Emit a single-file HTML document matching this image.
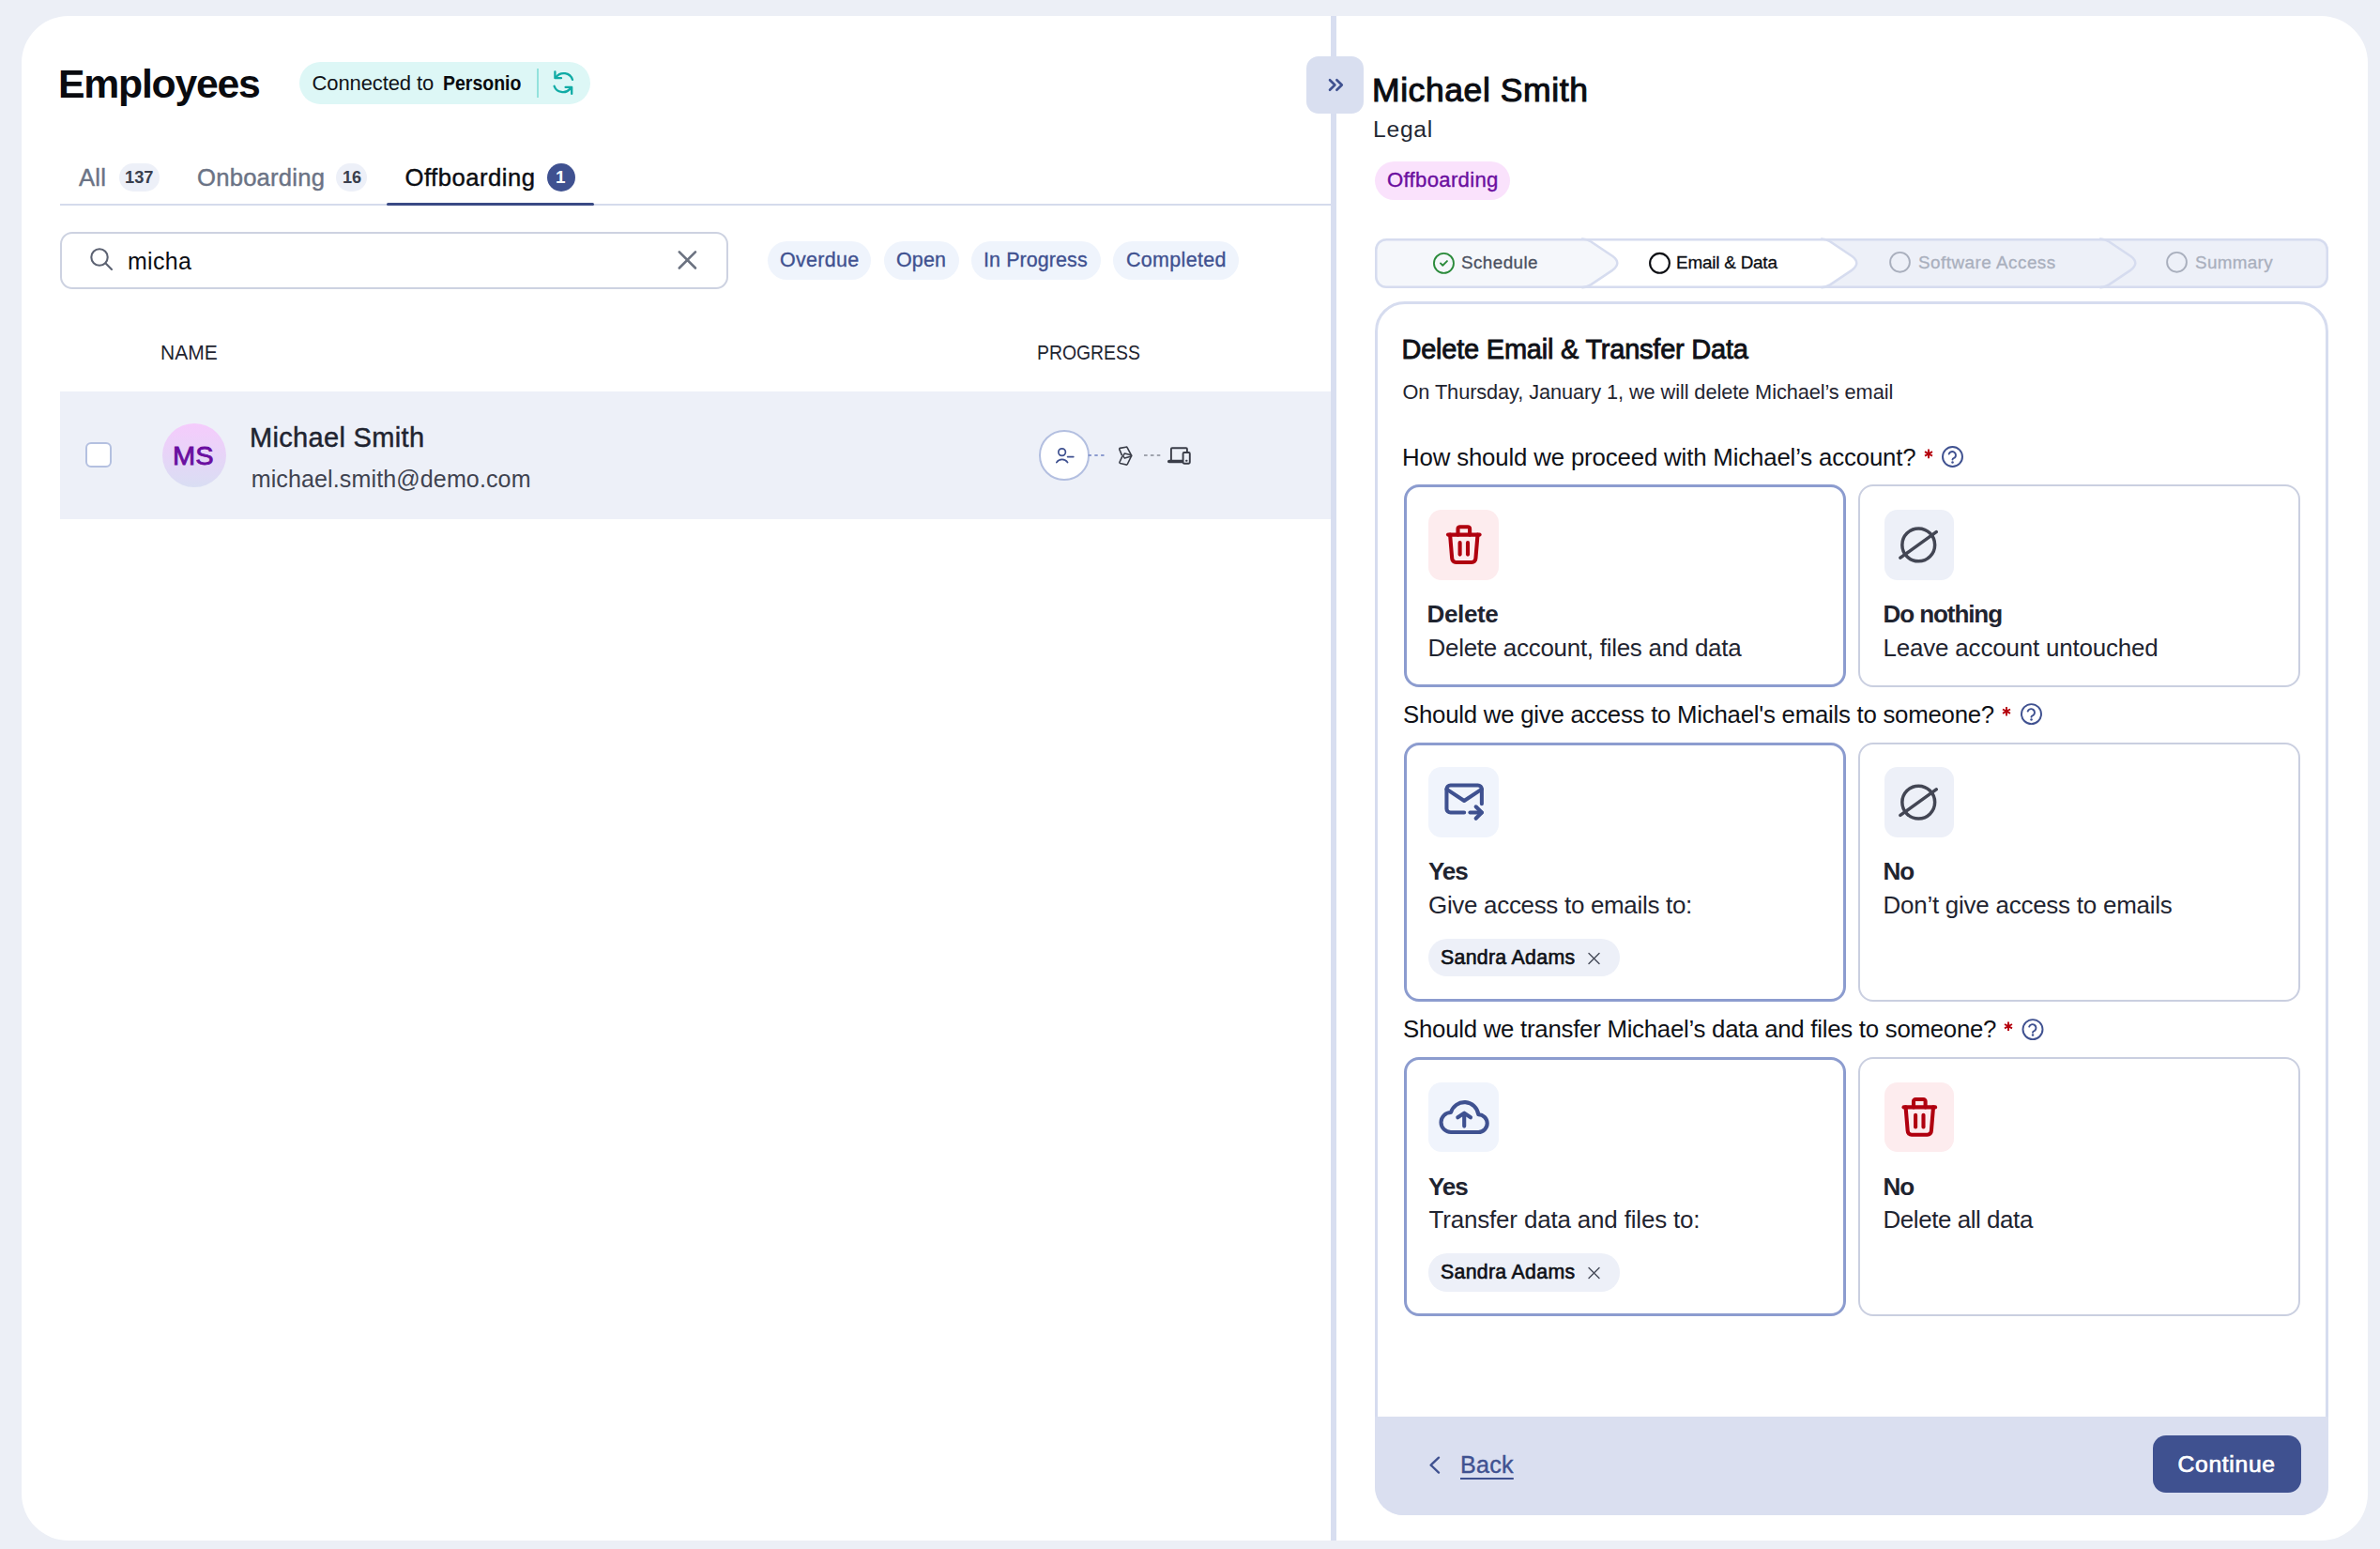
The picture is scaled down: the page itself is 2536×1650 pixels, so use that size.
<!DOCTYPE html>
<html><head><meta charset="utf-8"><style>
html,body{margin:0;padding:0;width:2536px;height:1650px;overflow:hidden;background:#ECEFF6;font-family:"Liberation Sans",sans-serif;}
.a{position:absolute;box-sizing:border-box;}
.t{position:absolute;white-space:nowrap;line-height:1;}
svg.ic{position:absolute;left:0;top:0;width:2536px;height:1650px;overflow:visible;}
</style></head><body>
<div class="a" style="left:23px;top:17px;width:2500px;height:1624px;background:#FFFFFF;border-radius:50px;"></div>
<!-- connected badge -->
<div class="a" style="left:319px;top:66px;width:310px;height:45px;background:#DDF7F6;border-radius:23px;"></div>
<div class="a" style="left:571.5px;top:73px;width:2px;height:31px;background:#93E2DC;"></div>
<!-- tab badges -->
<div class="a" style="left:127px;top:174px;width:43px;height:30px;background:#EDF0F8;border-radius:15px;"></div>
<div class="a" style="left:358px;top:174px;width:32.5px;height:30px;background:#EDF0F8;border-radius:15px;"></div>
<div class="a" style="left:583px;top:174px;width:30px;height:30px;background:#3F5190;border-radius:15px;"></div>
<!-- tab line -->
<div class="a" style="left:64px;top:217px;width:1354px;height:2px;background:#D5DBEC;"></div>
<div class="a" style="left:412px;top:216px;width:221px;height:3px;background:#3A4A85;border-radius:2px;"></div>
<!-- search -->
<div class="a" style="left:64px;top:247px;width:712px;height:61px;border:2px solid #CDD2E1;border-radius:13px;background:#fff;"></div>
<!-- filter pills -->
<div class="a" style="left:818px;top:257px;width:110px;height:41px;background:#EFF4FC;border-radius:21px;"></div>
<div class="a" style="left:942px;top:257px;width:80px;height:41px;background:#EFF4FC;border-radius:21px;"></div>
<div class="a" style="left:1035px;top:257px;width:138px;height:41px;background:#EFF4FC;border-radius:21px;"></div>
<div class="a" style="left:1186px;top:257px;width:134px;height:41px;background:#EFF4FC;border-radius:21px;"></div>
<!-- row -->
<div class="a" style="left:64px;top:417px;width:1354px;height:136px;background:#EDF0F8;"></div>
<div class="a" style="left:91px;top:471px;width:28px;height:27px;background:#fff;border:2px solid #B4C0E0;border-radius:6px;"></div>
<div class="a" style="left:173px;top:451px;width:68px;height:68px;border-radius:34px;background:linear-gradient(180deg,#F5CBFC 0%,#D9DEF3 100%);"></div>
<div class="a" style="left:1107.2px;top:458.4px;width:53.7px;height:53.7px;border-radius:50%;background:#fff;border:2px solid #B3BFE0;"></div>
<!-- divider & collapse -->
<div class="a" style="left:1418px;top:17px;width:6px;height:1624px;background:#D8DEF0;"></div>
<div class="a" style="left:1392px;top:60px;width:61px;height:61px;background:#D9DFF0;border-radius:13px;"></div>
<!-- offboarding pill -->
<div class="a" style="left:1465px;top:172px;width:144px;height:41px;background:#FAE2FC;border-radius:21px;"></div>
<!-- card -->
<div class="a" style="left:1465px;top:321px;width:1016px;height:1293px;border:3px solid #D6DCEF;border-radius:32px;background:#fff;"></div>
<div class="a" style="left:1465px;top:1509px;width:1016px;height:104.5px;background:#DADFF0;border-radius:0 0 30px 30px;"></div>
<!-- option cards -->
<div class="a" style="left:1495.5px;top:516px;width:471.5px;height:216px;border:3px solid #8C9CCF;border-radius:16px;"></div>
<div class="a" style="left:1980px;top:516px;width:471px;height:216px;border:2px solid #CACFE0;border-radius:16px;"></div>
<div class="a" style="left:1495.5px;top:791px;width:471.5px;height:276px;border:3px solid #8C9CCF;border-radius:16px;"></div>
<div class="a" style="left:1980px;top:791px;width:471px;height:276px;border:2px solid #CACFE0;border-radius:16px;"></div>
<div class="a" style="left:1495.5px;top:1126px;width:471.5px;height:276px;border:3px solid #8C9CCF;border-radius:16px;"></div>
<div class="a" style="left:1980px;top:1126px;width:471px;height:276px;border:2px solid #CACFE0;border-radius:16px;"></div>
<!-- icon boxes -->
<div class="a" style="left:1522px;top:543px;width:75px;height:75px;background:#FDECEE;border-radius:14px;"></div>
<div class="a" style="left:2008px;top:543px;width:74px;height:75px;background:#EDF0F8;border-radius:14px;"></div>
<div class="a" style="left:1522px;top:817px;width:75px;height:75px;background:#F0F4FC;border-radius:14px;"></div>
<div class="a" style="left:2008px;top:817px;width:74px;height:75px;background:#EDF0F8;border-radius:14px;"></div>
<div class="a" style="left:1522px;top:1153px;width:75px;height:74px;background:#F0F4FC;border-radius:14px;"></div>
<div class="a" style="left:2008px;top:1153px;width:74px;height:74px;background:#FDECEE;border-radius:14px;"></div>
<!-- name pills -->
<div class="a" style="left:1522px;top:1000px;width:204px;height:40px;background:#EDF0F8;border-radius:20px;"></div>
<div class="a" style="left:1522px;top:1335px;width:204px;height:41px;background:#EDF0F8;border-radius:20px;"></div>
<!-- continue -->
<div class="a" style="left:2294px;top:1529px;width:158px;height:61px;background:#3F5190;border-radius:14px;"></div>
<svg class="ic" viewBox="0 0 2536 1650" fill="none" stroke-linecap="round" stroke-linejoin="round">
<!-- stepper -->
<defs><clipPath id="stc"><rect x="1465" y="254" width="1016" height="53" rx="12"/></clipPath></defs>
<g clip-path="url(#stc)">
  <rect x="1465" y="254" width="1016" height="53" fill="#FFFFFF"/>
  <path d="M1460,254 H1686.0 Q1691.0,254.8 1695.0,257.2 L1718.5,273 Q1723.3,276.5 1723.3,280.3 Q1723.3,284 1718.5,287.6 L1695.0,303.4 Q1691.0,306 1686.0,307 H1460 Z" fill="#F5F7FB"/>
  <path d="M1941.0,254 H2490 V307 H1941.0 Q1946.0,306 1950.0,303.4 L1973.5,287.6 Q1978.3,284 1978.3,280.3 Q1978.3,276.5 1973.5,273 L1950.0,257.2 Q1946.0,254.8 1941.0,254 Z" fill="#EDF0F8"/>
</g>
<rect x="1466.25" y="255.25" width="1013.5" height="50.5" rx="11" stroke="#D6DCEF" stroke-width="2.5"/>
<g stroke="#D6DCEF" stroke-width="2.5">
  <path d="M1686.0,254.6 Q1691.0,254.8 1695.0,257.2 L1718.5,273 Q1723.3,276.5 1723.3,280.3 Q1723.3,284 1718.5,287.6 L1695.0,303.4 Q1691.0,305.8 1686.0,306.2"/>
  <path d="M1941.0,254.6 Q1946.0,254.8 1950.0,257.2 L1973.5,273 Q1978.3,276.5 1978.3,280.3 Q1978.3,284 1973.5,287.6 L1950.0,303.4 Q1946.0,305.8 1941.0,306.2"/>
  <path d="M2238.0,254.6 Q2243.0,254.8 2247.0,257.2 L2270.5,273 Q2275.3,276.5 2275.3,280.3 Q2275.3,284 2270.5,287.6 L2247.0,303.4 Q2243.0,305.8 2238.0,306.2"/>
</g>
<!-- step icons (tabler scale 1.167) -->
<g transform="translate(1524.45,266.4) scale(1.1667)" stroke="#2A8A3A" stroke-width="1.6">
  <circle cx="12" cy="12" r="9"/><path d="M9 12l2 2l4 -4"/>
</g>
<circle cx="1768.5" cy="280.3" r="10.4" stroke="#0B0D12" stroke-width="2.1"/>
<circle cx="2024.5" cy="279.3" r="10.4" stroke="#A9AFBD" stroke-width="1.9"/>
<circle cx="2319.5" cy="279.3" r="10.4" stroke="#A9AFBD" stroke-width="1.9"/>
<!-- refresh -->
<g stroke="#10ABA5" stroke-width="2.3">
  <path d="M610,84.8 A10,10 0 0 0 592.6,82"/>
  <path d="M591.4,76.3 V83.2 H598"/>
  <path d="M590.6,91.8 A10,10 0 0 0 607.3,94.9"/>
  <path d="M602.6,92.9 H609.2 V99.9"/>
</g>
<!-- search -->
<g stroke="#5C6272" stroke-width="2.1">
  <circle cx="106" cy="274" r="8.7"/>
  <path d="M112.6,280.6 L119,287"/>
</g>
<!-- clear x -->
<g stroke="#6B7280" stroke-width="2.6">
  <path d="M723.8,268.3 L741,285.5 M741,268.3 L723.8,285.5"/>
</g>
<!-- progress icons -->
<g stroke="#3F5190" stroke-width="1.7">
  <circle cx="1131.6" cy="481.6" r="3.8"/>
  <path d="M1125.8,492.6 A6.9,6.9 0 0 1 1137.6,492.6"/>
  <path d="M1137.6,486.6 H1143.8"/>
</g>
<path d="M1159.5,485 H1176.5" stroke="#8C9BCF" stroke-width="1.9" stroke-dasharray="3.4 3.4" stroke-linecap="butt"/>
<path d="M1219,485 H1236.3" stroke="#A0A4AE" stroke-width="1.9" stroke-dasharray="3.6 3.3" stroke-linecap="butt"/>
<g stroke="#3A3D48" stroke-width="1.6">
  <path d="M1195.3,484.6 L1192.8,478.6 Q1192.5,477.6 1193.5,477.4 L1199.8,476.2 Q1200.8,476 1201.2,476.9 L1205.7,485.3 L1201.3,494.5 Q1200.9,495.3 1200,495.1 L1193.6,493.4 Q1192.6,493.1 1193,492.2 L1195.6,486.6"/>
  <path d="M1196.6,485.6 L1198.4,483 L1205.4,484.7 L1205.4,485.9 L1198.4,488.1 Z"/>
</g>
<g stroke="#3A3D48" stroke-width="1.9">
  <path d="M1247.9,490.4 V478.3 Q1247.9,477.2 1249,477.2 H1263.8 Q1264.9,477.2 1264.9,478.3 V481.5"/>
  <path d="M1260.2,492.4 H1246.2 Q1244.9,492.4 1244.9,491.4 Q1244.9,490.6 1246,490.6 H1260.2"/>
  <rect x="1260.6" y="482" width="7.2" height="11.8" rx="1.2"/>
  <path d="M1264,490.7 H1264.6"/>
</g>
<!-- collapse chevrons -->
<g stroke="#3F5190" stroke-width="2.6">
  <path d="M1417,85.2 L1422.4,90.5 L1417,95.8"/>
  <path d="M1424.4,85.2 L1429.8,90.5 L1424.4,95.8"/>
</g>
<!-- asterisks + help -->
<g stroke="#B5000D" stroke-width="1.9" stroke-linecap="butt">
  <path d="M2055,478.6 V488.2 M2051,481.2 L2059,485.6 M2059,481.2 L2051,485.6"/>
  <path d="M2138,752.9 V762.5 M2134,755.5 L2142,759.9 M2142,755.5 L2134,759.9"/>
  <path d="M2140,1088.4 V1098 M2136,1091 L2144,1095.4 M2144,1091 L2136,1095.4"/>
</g>
<g stroke="#3F5190" stroke-width="1.95">
<circle cx="2080.50" cy="486.50" r="10.5"/><path d="M2076.70,483.50 A3.75,3.75 0 1 1 2082.60,487.70 Q2080.50,488.60 2080.50,489.60"/><path d="M2080.50,492.50 v0.01" stroke-width="2.5"/>
<circle cx="2164.50" cy="760.60" r="10.5"/><path d="M2160.70,757.60 A3.75,3.75 0 1 1 2166.60,761.80 Q2164.50,762.70 2164.50,763.70"/><path d="M2164.50,766.60 v0.01" stroke-width="2.5"/>
<circle cx="2166.00" cy="1096.60" r="10.5"/><path d="M2162.20,1093.60 A3.75,3.75 0 1 1 2168.10,1097.80 Q2166.00,1098.70 2166.00,1099.70"/><path d="M2166.00,1102.60 v0.01" stroke-width="2.5"/>
</g>
<!-- trash icons -->
<g stroke="#B0000F" stroke-width="1.95">
  <g transform="translate(1534.6,554.9) scale(2.1)"><path d="M4 7l16 0"/><path d="M10 11l0 6"/><path d="M14 11l0 6"/><path d="M5 7l1 12a2 2 0 0 0 2 2h8a2 2 0 0 0 2 -2l1 -12"/><path d="M9 7v-3a1 1 0 0 1 1 -1h4a1 1 0 0 1 1 1v3"/></g>
  <g transform="translate(2020.1,1164.7) scale(2.1)"><path d="M4 7l16 0"/><path d="M10 11l0 6"/><path d="M14 11l0 6"/><path d="M5 7l1 12a2 2 0 0 0 2 2h8a2 2 0 0 0 2 -2l1 -12"/><path d="M9 7v-3a1 1 0 0 1 1 -1h4a1 1 0 0 1 1 1v3"/></g>
</g>
<!-- empty set -->
<g stroke="#434654" stroke-width="3.5">
  <circle cx="2044.25" cy="580.4" r="17.4"/><path d="M2024.9,594.2 L2063.2,566.6"/>
  <circle cx="2044.25" cy="854.6" r="17.4"/><path d="M2024.9,868.4 L2063.2,840.8"/>
</g>
<!-- mail forward -->
<g transform="translate(1535.2,828.1) scale(2.08)" stroke="#3F5190" stroke-width="1.95">
  <path d="M12 18h-7a2 2 0 0 1 -2 -2v-10a2 2 0 0 1 2 -2h14a2 2 0 0 1 2 2v7.5"/><path d="M3 6l9 6l9 -6"/><path d="M15 18h6"/><path d="M18 15l3 3l-3 3"/>
</g>
<!-- cloud upload -->
<g stroke="#3F5190" stroke-width="4.1">
  <path d="M1546,1206 A10.5,10.5 0 0 1 1546,1185 A15,15 0 0 1 1575.3,1187.2 A9.4,9.4 0 0 1 1575.3,1206 Z"/>
  <path d="M1560.2,1199.6 V1186.2 M1553.3,1190.3 L1560.2,1185.6 L1567,1190.3"/>
</g>
<!-- pill x -->
<g stroke="#454A58" stroke-width="1.4">
  <path d="M1693,1015.5 L1704,1026.5 M1704,1015.5 L1693,1026.5"/>
  <path d="M1693,1350.5 L1704,1361.5 M1704,1350.5 L1693,1361.5"/>
</g>
<!-- back chevron -->
<path d="M1533,1552.6 L1524.6,1560.6 L1533,1568.6" stroke="#3F5190" stroke-width="2.3"/>
</svg>
<div id="emp" class="t" style="left:62.00px;top:67.96px;font-size:42.75px;font-weight:700;color:#0A0B0F;letter-spacing:-1.250px;">Employees</div>
<div id="conn" class="t" style="left:332.50px;top:78.08px;font-size:22.03px;font-weight:400;color:#111318;letter-spacing:-0.109px;">Connected to</div>
<div id="pers" class="t" style="left:471.50px;top:77.91px;font-size:22.46px;font-weight:700;color:#0A0B0F;letter-spacing:0.000px;transform:scaleX(0.8681);transform-origin:0 0;">Personio</div>
<div id="tab_all" class="t" style="left:84.00px;top:177.00px;font-size:25.65px;font-weight:400;color:#6B7385;letter-spacing:0.200px;-webkit-text-stroke:0.41px #6B7385;">All</div>
<div id="b137" class="t" style="left:133.00px;top:179.79px;font-size:18.84px;font-weight:700;color:#3A3F4D;letter-spacing:0.000px;transform:scaleX(0.9694);transform-origin:0 0;">137</div>
<div id="tab_on" class="t" style="left:210.00px;top:177.00px;font-size:25.65px;font-weight:400;color:#6B7385;letter-spacing:0.222px;-webkit-text-stroke:0.41px #6B7385;">Onboarding</div>
<div id="b16" class="t" style="left:364.50px;top:179.79px;font-size:18.84px;font-weight:700;color:#3A3F4D;letter-spacing:0.000px;transform:scaleX(0.9627);transform-origin:0 0;">16</div>
<div id="tab_off" class="t" style="left:431.50px;top:177.00px;font-size:25.65px;font-weight:400;color:#0B0D12;letter-spacing:0.500px;-webkit-text-stroke:0.41px #0B0D12;">Offboarding</div>
<div id="b1" class="t" style="left:592.00px;top:179.79px;font-size:18.84px;font-weight:700;color:#FFFFFF;letter-spacing:0.000px;">1</div>
<div id="micha" class="t" style="left:136.00px;top:265.61px;font-size:24.93px;font-weight:400;color:#0B0D12;letter-spacing:0.350px;">micha</div>
<div id="f1" class="t" style="left:831.00px;top:266.57px;font-size:21.45px;font-weight:400;color:#3F5190;letter-spacing:0.333px;-webkit-text-stroke:0.34px #3F5190;">Overdue</div>
<div id="f2" class="t" style="left:955.00px;top:266.57px;font-size:21.45px;font-weight:400;color:#3F5190;letter-spacing:0.167px;-webkit-text-stroke:0.34px #3F5190;">Open</div>
<div id="f3" class="t" style="left:1048.00px;top:266.57px;font-size:21.45px;font-weight:400;color:#3F5190;letter-spacing:0.100px;-webkit-text-stroke:0.34px #3F5190;">In Progress</div>
<div id="f4" class="t" style="left:1200.00px;top:266.57px;font-size:21.45px;font-weight:400;color:#3F5190;letter-spacing:0.350px;-webkit-text-stroke:0.34px #3F5190;">Completed</div>
<div id="name" class="t" style="left:171.00px;top:365.31px;font-size:22.46px;font-weight:400;color:#1F2430;letter-spacing:0.000px;transform:scaleX(0.9355);transform-origin:0 0;">NAME</div>
<div id="prog" class="t" style="left:1105.00px;top:364.71px;font-size:22.46px;font-weight:400;color:#1F2430;letter-spacing:0.000px;transform:scaleX(0.8629);transform-origin:0 0;">PROGRESS</div>
<div id="ms" class="t" style="left:184.00px;top:472.39px;font-size:27.54px;font-weight:400;color:#6A0DA0;letter-spacing:0.000px;transform:scaleX(1.0526);transform-origin:0 0;-webkit-text-stroke:0.83px #6A0DA0;">MS</div>
<div id="rowname" class="t" style="left:266.00px;top:452.16px;font-size:28.99px;font-weight:400;color:#1F2430;letter-spacing:0.333px;-webkit-text-stroke:0.46px #1F2430;">Michael Smith</div>
<div id="email" class="t" style="left:267.70px;top:498.39px;font-size:25.07px;font-weight:400;color:#3F4350;letter-spacing:0.105px;">michael.smith@demo.com</div>
<div id="hname" class="t" style="left:1462.00px;top:78.62px;font-size:35.51px;font-weight:400;color:#0B0D12;letter-spacing:0.583px;-webkit-text-stroke:1.07px #0B0D12;">Michael Smith</div>
<div id="legal" class="t" style="left:1463.00px;top:125.86px;font-size:24.64px;font-weight:400;color:#232833;letter-spacing:0.750px;">Legal</div>
<div id="offpill" class="t" style="left:1478.00px;top:180.55px;font-size:22.17px;font-weight:400;color:#6B0F9F;letter-spacing:0.300px;-webkit-text-stroke:0.35px #6B0F9F;">Offboarding</div>
<div id="s1" class="t" style="left:1557.00px;top:270.79px;font-size:18.84px;font-weight:400;color:#4A5060;letter-spacing:0.429px;-webkit-text-stroke:0.30px #4A5060;">Schedule</div>
<div id="s2" class="t" style="left:1786.00px;top:270.79px;font-size:18.84px;font-weight:400;color:#0B0D12;letter-spacing:-0.182px;-webkit-text-stroke:0.30px #0B0D12;">Email &amp; Data</div>
<div id="s3" class="t" style="left:2044.00px;top:270.79px;font-size:18.84px;font-weight:400;color:#A9AFBD;letter-spacing:0.500px;-webkit-text-stroke:0.30px #A9AFBD;">Software Access</div>
<div id="s4" class="t" style="left:2339.00px;top:270.79px;font-size:18.84px;font-weight:400;color:#A9AFBD;letter-spacing:0.333px;-webkit-text-stroke:0.30px #A9AFBD;">Summary</div>
<div id="title" class="t" style="left:1493.50px;top:358.16px;font-size:28.99px;font-weight:400;color:#0F1117;letter-spacing:-0.222px;-webkit-text-stroke:0.87px #0F1117;">Delete Email &amp; Transfer Data</div>
<div id="sub" class="t" style="left:1494.50px;top:407.32px;font-size:21.74px;font-weight:400;color:#1F2430;letter-spacing:-0.075px;">On Thursday, January 1, we will delete Michael’s email</div>
<div id="q1" class="t" style="left:1494.00px;top:474.57px;font-size:25.80px;font-weight:400;color:#0F1117;letter-spacing:-0.155px;">How should we proceed with Michael’s account?</div>
<div id="q2" class="t" style="left:1495.00px;top:748.57px;font-size:25.80px;font-weight:400;color:#0F1117;letter-spacing:-0.246px;">Should we give access to Michael's emails to someone?</div>
<div id="q3" class="t" style="left:1495.00px;top:1083.57px;font-size:25.80px;font-weight:400;color:#0F1117;letter-spacing:-0.256px;">Should we transfer Michael’s data and files to someone?</div>
<div id="o1t" class="t" style="left:1520.50px;top:640.63px;font-size:26.09px;font-weight:700;color:#1F2430;letter-spacing:-0.400px;">Delete</div>
<div id="o1d" class="t" style="left:1521.50px;top:677.65px;font-size:25.94px;font-weight:400;color:#1F2430;letter-spacing:-0.262px;">Delete account, files and data</div>
<div id="o2t" class="t" style="left:2006.50px;top:640.63px;font-size:26.09px;font-weight:700;color:#1F2430;letter-spacing:-1.111px;">Do nothing</div>
<div id="o2d" class="t" style="left:2006.50px;top:677.65px;font-size:25.94px;font-weight:400;color:#1F2430;letter-spacing:-0.173px;">Leave account untouched</div>
<div id="o3t" class="t" style="left:1522.00px;top:914.63px;font-size:26.09px;font-weight:700;color:#1F2430;letter-spacing:-1.150px;">Yes</div>
<div id="o3d" class="t" style="left:1522.00px;top:951.55px;font-size:25.94px;font-weight:400;color:#1F2430;letter-spacing:-0.292px;">Give access to emails to:</div>
<div id="o4t" class="t" style="left:2006.50px;top:914.63px;font-size:26.09px;font-weight:700;color:#1F2430;letter-spacing:-1.000px;">No</div>
<div id="o4d" class="t" style="left:2006.50px;top:951.55px;font-size:25.94px;font-weight:400;color:#1F2430;letter-spacing:-0.231px;">Don’t give access to emails</div>
<div id="p1" class="t" style="left:1535.00px;top:1009.69px;font-size:21.30px;font-weight:400;color:#0F1117;letter-spacing:0.309px;-webkit-text-stroke:0.64px #0F1117;">Sandra Adams</div>
<div id="o5t" class="t" style="left:1522.00px;top:1250.63px;font-size:26.09px;font-weight:700;color:#1F2430;letter-spacing:-1.150px;">Yes</div>
<div id="o5d" class="t" style="left:1522.50px;top:1286.55px;font-size:25.94px;font-weight:400;color:#1F2430;letter-spacing:-0.158px;">Transfer data and files to:</div>
<div id="o6t" class="t" style="left:2006.50px;top:1250.63px;font-size:26.09px;font-weight:700;color:#1F2430;letter-spacing:-1.000px;">No</div>
<div id="o6d" class="t" style="left:2006.50px;top:1286.55px;font-size:25.94px;font-weight:400;color:#1F2430;letter-spacing:-0.429px;">Delete all data</div>
<div id="p2" class="t" style="left:1535.00px;top:1344.69px;font-size:21.30px;font-weight:400;color:#0F1117;letter-spacing:0.309px;-webkit-text-stroke:0.64px #0F1117;">Sandra Adams</div>
<div id="back" class="t" style="left:1556.00px;top:1548.19px;font-size:25.07px;font-weight:400;color:#3F5190;letter-spacing:0.267px;-webkit-text-stroke:0.40px #3F5190;text-decoration:underline;text-underline-offset:5px;text-decoration-thickness:2px;">Back</div>
<div id="cont" class="t" style="left:2320.50px;top:1548.36px;font-size:24.64px;font-weight:400;color:#FFFFFF;letter-spacing:0.714px;-webkit-text-stroke:0.74px #FFFFFF;">Continue</div>
</body></html>
